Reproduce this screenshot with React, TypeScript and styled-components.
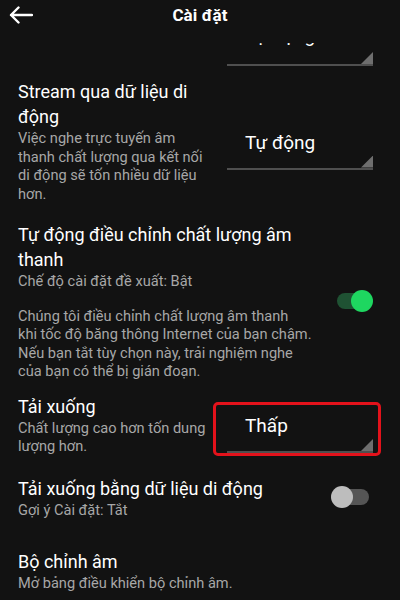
import * as React from 'react';
import styled, { createGlobalStyle } from 'styled-components';

const GlobalStyle = createGlobalStyle`
  html, body {
    margin: 0;
    padding: 0;
    background: #121212;
  }
  body {
    font-family: Roboto, "Noto Sans", "Liberation Sans", sans-serif;
    -webkit-font-smoothing: antialiased;
  }
`;

const Screen = styled.div`
  width: 400px;
  height: 600px;
  background: #121212;
  color: #fff;
  display: flex;
  flex-direction: column;
  overflow: hidden;
`;

const Header = styled.header`
  height: 43px;
  box-sizing: border-box;
  padding-bottom: 13px;
  flex: none;
  display: grid;
  grid-template-columns: 44px 1fr 44px;
  align-items: center;
`;

const BackButton = styled.button`
  width: 44px;
  height: 30px;
  border: 0;
  padding: 0 0 0 9px;
  background: none;
  display: flex;
  align-items: center;
  color: #fff;
`;

const Title = styled.h1`
  margin: 0;
  text-align: center;
  font-size: 17px;
  font-weight: 700;
  line-height: 30px;
  letter-spacing: 0.1px;
`;

const Body = styled.div`
  flex: 1;
  overflow: hidden;
`;

// list is scrolled a little, so the first dropdown sits under the header
const List = styled.div`
  margin-top: -25px;
`;

type Side = 'select' | 'switch' | 'none';

const columns: Record<Side, string> = {
  select: '1fr 146px',
  switch: '1fr 36px',
  none: '1fr',
};

const Row = styled.div<{ $top?: number; $side?: Side }>`
  display: grid;
  grid-template-columns: ${(p) => columns[p.$side ?? 'select']};
  column-gap: ${(p) => (p.$side === 'switch' ? 18 : 15)}px;
  align-items: center;
  padding: ${(p) => p.$top ?? 14}px 27px 0 18px;
`;

const TailRow = styled.div`
  display: flex;
  justify-content: flex-end;
  padding: 0 27px 0 18px;
`;

const Texts = styled.div`
  display: flex;
  flex-direction: column;
`;

const Label = styled.div<{ $narrow?: boolean }>`
  font-size: 18px;
  line-height: 25px;
  color: #fff;
  max-width: ${(p) => (p.$narrow ? '290px' : 'none')};
`;

const Hint = styled.div<{ $gap?: number }>`
  font-size: 14.6px;
  line-height: 18.5px;
  color: #a7a7a7;
  margin-top: ${(p) => p.$gap ?? 0}px;
`;

const Dropdown = styled.div<{ $marked?: boolean; $tall?: boolean; $drop?: number }>`
  position: relative;
  width: 146px;
  height: ${(p) => (p.$tall ? 48 : 45)}px;
  box-sizing: border-box;
  margin-top: ${(p) => p.$drop ?? 0}px;
  padding: 6px 0 0 18px;
  border-bottom: 2px solid #4f4f4f;
  font-size: 19px;
  line-height: 24px;
  color: #fff;

  &::before {
    content: '';
    position: absolute;
    right: 0;
    bottom: 0;
    width: 12px;
    height: 12px;
    background: #6e6e6e;
    clip-path: polygon(100% 0, 100% 100%, 0 100%);
  }

  &::after {
    content: '';
    display: ${(p) => (p.$marked ? 'block' : 'none')};
    position: absolute;
    left: -14px;
    right: -8px;
    top: -6px;
    bottom: -5px;
    border: 3px solid #e3121b;
    border-radius: 5px;
  }
`;

const Track = styled.div<{ $on?: boolean }>`
  position: relative;
  width: 32px;
  height: 16px;
  border-radius: 8px;
  background: ${(p) => (p.$on ? '#1f5233' : '#555555')};
`;

const Knob = styled.div<{ $on?: boolean }>`
  position: absolute;
  top: -3px;
  left: ${(p) => (p.$on ? '14px' : '-6px')};
  width: 22px;
  height: 22px;
  border-radius: 50%;
  background: ${(p) => (p.$on ? '#1ed760' : '#bdbdbd')};
`;

const Toggle = ({ on }: { on?: boolean }) => (
  <Track $on={on}>
    <Knob $on={on} />
  </Track>
);

const BackArrow = () => (
  <svg width="24" height="18" viewBox="0 0 24 18" fill="none">
    <path
      d="M23 9H2M9.5 1.5L2 9l7.5 7.5"
      stroke="#fff"
      strokeWidth="2.4"
      strokeLinecap="round"
      strokeLinejoin="round"
    />
  </svg>
);

export default function App() {
  return (
    <Screen>
      <GlobalStyle />
      <Header>
        <BackButton aria-label="Quay lại">
          <BackArrow />
        </BackButton>
        <Title>Cài đặt</Title>
        <span />
      </Header>
      <Body>
        <List>
          <TailRow>
            <Dropdown $tall>Tự động</Dropdown>
          </TailRow>

          <Row $top={13}>
            <Texts>
              <Label>Stream qua dữ liệu di động</Label>
              <Hint>
                Việc nghe trực tuyến âm thanh chất lượng qua kết nối di động sẽ
                tốn nhiều dữ liệu hơn.
              </Hint>
            </Texts>
            <Dropdown $drop={12}>Tự động</Dropdown>
          </Row>

          <Row $top={19} $side="switch">
            <Texts>
              <Label $narrow>Tự động điều chỉnh chất lượng âm thanh</Label>
              <Hint>Chế độ cài đặt đề xuất: Bật</Hint>
              <Hint $gap={16}>
                Chúng tôi điều chỉnh chất lượng âm thanh
                <br />
                khi tốc độ băng thông Internet của bạn chậm.
                <br />
                Nếu bạn tắt tùy chọn này, trải nghiệm nghe
                <br />
                của bạn có thể bị gián đoạn.
              </Hint>
            </Texts>
            <Toggle on />
          </Row>

          <Row $top={13}>
            <Texts>
              <Label>Tải xuống</Label>
              <Hint>Chất lượng cao hơn tốn dung lượng hơn.</Hint>
            </Texts>
            <Dropdown $marked $drop={12}>
              Thấp
            </Dropdown>
          </Row>

          <Row $top={20} $side="switch">
            <Texts>
              <Label>Tải xuống bằng dữ liệu di động</Label>
              <Hint>Gợi ý Cài đặt: Tắt</Hint>
            </Texts>
            <Toggle />
          </Row>

          <Row $top={30} $side="none">
            <Texts>
              <Label>Bộ chỉnh âm</Label>
              <Hint>Mở bảng điều khiển bộ chỉnh âm.</Hint>
            </Texts>
          </Row>
        </List>
      </Body>
    </Screen>
  );
}
